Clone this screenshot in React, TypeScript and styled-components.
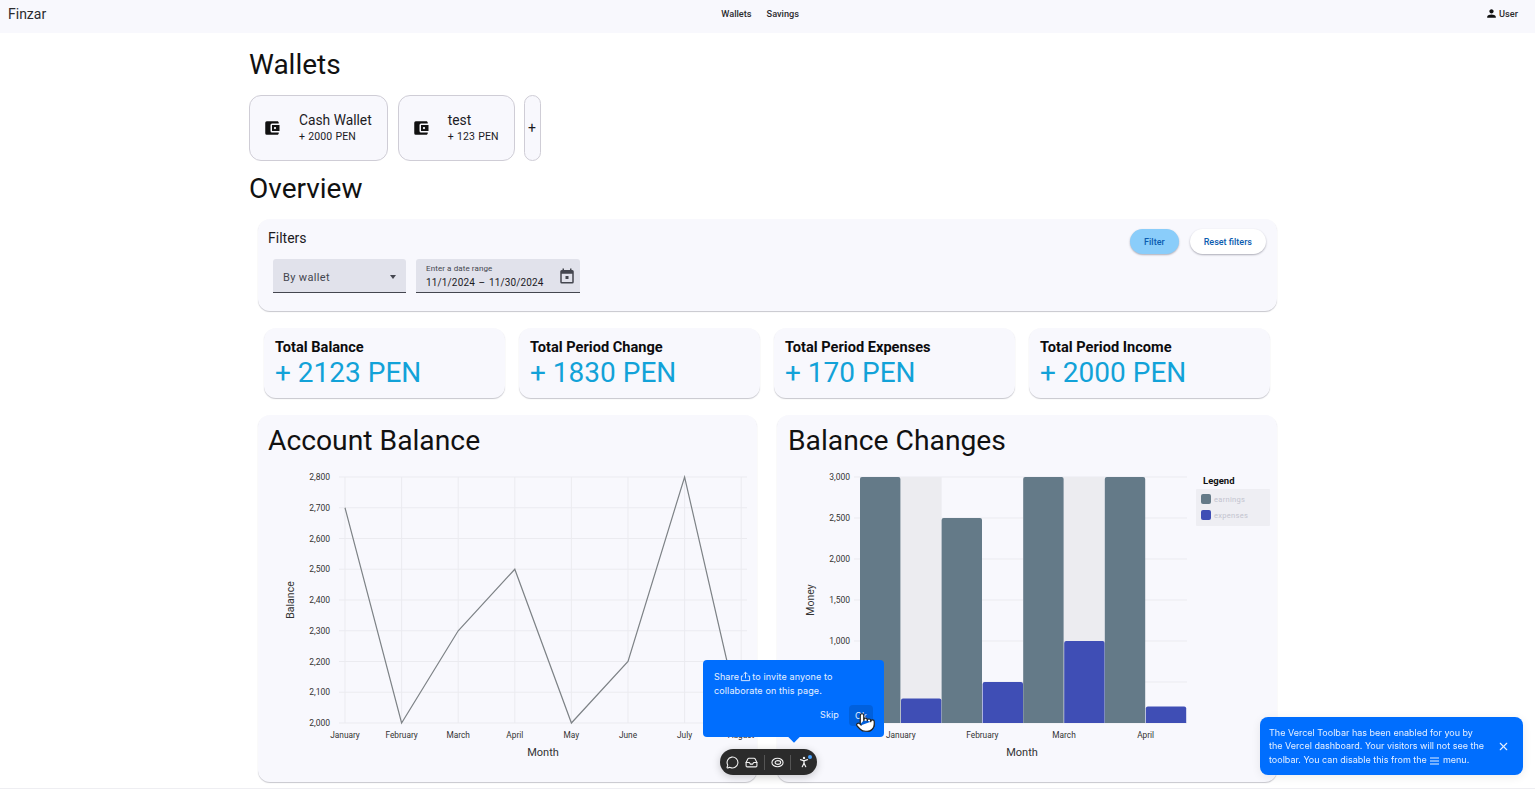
import React from "react";
import { Inbox, MessageCircle, PersonStanding, Pointer, X } from "lucide-react";
import { MdAccountBalanceWallet, MdPerson } from "react-icons/md";
import styled, { createGlobalStyle } from "styled-components";

const GlobalStyle = createGlobalStyle`
  html, body {
    margin: 0;
    height: 100%;
    overflow: hidden;
    background: #fff;
    font-family: Roboto, "Liberation Sans", sans-serif;
    color: #111;
  }
  * { box-sizing: border-box; }
`;

const surface = "#f8f8fd";

const Nav = styled.nav`
  height: 33px;
  padding: 0 17px 6px 8px;
  background: ${surface};
  display: flex;
  align-items: center;
  justify-content: space-between;
`;

const Brand = styled.span`
  font-size: 14px;
  color: #2b2b2e;
`;

const NavLinks = styled.div`
  display: flex;
  gap: 15px;
  padding-right: 11px;
`;

const NavLink = styled.a`
  font-size: 9.2px;
  font-weight: 500;
  color: #2b2b2e;
`;

const UserButton = styled.div`
  display: flex;
  align-items: center;
  gap: 1px;
  font-size: 9.2px;
  font-weight: 500;
  color: #2b2b2e;
`;

const Main = styled.main`
  width: 1037px;
  margin: 0 auto;
  padding: 14px 0 6px;
`;

const PageTitle = styled.h1<{ $top?: number }>`
  margin: ${({ $top }) => $top ?? 0}px 0 12px;
  font-size: 28px;
  line-height: 36px;
  font-weight: 400;
  color: #111;
`;

const WalletRow = styled.div`
  display: flex;
  gap: 10px;
`;

const WalletCard = styled.div`
  height: 66px;
  padding: 0 15px 0 13px;
  display: flex;
  align-items: center;
  gap: 18px;
  background: ${surface};
  border: 1px solid #cfcdd6;
  border-radius: 12px;
`;

const WalletText = styled.div`
  display: flex;
  flex-direction: column;
  gap: 1px;
  padding-bottom: 2px;
`;

const WalletName = styled.span`
  font-size: 13.8px;
  line-height: 18px;
  color: #1c1b1f;
`;

const WalletAmount = styled.span`
  font-size: 10.5px;
  line-height: 14px;
  letter-spacing: 0.1px;
  word-spacing: 0.5px;
  color: #1c1b1f;
`;

const AddWallet = styled.button`
  width: 17px;
  height: 66px;
  margin-left: -1px;
  padding: 0;
  font: 400 14px Roboto, sans-serif;
  color: #1c1b1f;
  background: ${surface};
  border: 1px solid #cfcdd6;
  border-radius: 9px;
`;

const Card = styled.section`
  background: ${surface};
  border-radius: 12px;
  box-shadow: 0 1px 1px rgba(70, 70, 90, 0.3);
`;

const FilterCard = styled(Card)`
  height: 92px;
  margin: 0 9px;
  padding: 10px 11px 18px 10px;
`;

const FilterHead = styled.div`
  display: flex;
  justify-content: space-between;
  align-items: center;
  height: 25px;
`;

const FilterTitle = styled.h2`
  margin: -8px 0 0;
  font-size: 14px;
  font-weight: 400;
  color: #1c1b1f;
`;

const FilterActions = styled.div`
  display: flex;
  gap: 11px;
`;

const ActionButton = styled.button<{ $primary?: boolean }>`
  height: 25px;
  padding: 0 14px;
  border: 0;
  border-radius: 13px;
  font: 500 9px Roboto, sans-serif;
  color: #0b5cb0;
  background: ${({ $primary }) => ($primary ? "#8acdfa" : "#fff")};
  box-shadow: 0 1px 2px rgba(60, 60, 80, 0.4);
`;

const FieldRow = styled.div`
  display: flex;
  gap: 10px;
  margin: 5px 0 0 5px;
`;

const Field = styled.div<{ $width: number }>`
  position: relative;
  width: ${({ $width }) => $width}px;
  height: 34px;
  padding: 2px 10px 0;
  display: flex;
  align-items: center;
  justify-content: space-between;
  background: #e1e2eb;
  border-bottom: 1px solid #44464f;
  border-radius: 3px 3px 0 0;
  color: #44464f;
`;

const SelectValue = styled.span`
  margin-top: 2px;
  font-size: 11px;
  letter-spacing: 0.35px;
`;

const SelectArrow = styled.span`
  width: 0;
  height: 0;
  border: 3.5px solid transparent;
  border-top: 4px solid #44464f;
  border-bottom: 0;
`;

const DateStack = styled.div`
  display: flex;
  flex-direction: column;
  gap: 2px;
`;

const DateLabel = styled.span`
  font-size: 8px;
  line-height: 10px;
  letter-spacing: 0.1px;
`;

const DateValue = styled.span`
  font-size: 10px;
  line-height: 14px;
  letter-spacing: 0.15px;
  color: #1c1b1f;
  word-spacing: 1px;
  white-space: nowrap;
`;

const CalendarSlot = styled.span`
  display: flex;
  margin: -2px -6px 0 0;
`;

const StatGrid = styled.div`
  display: grid;
  grid-template-columns: repeat(4, 241px);
  gap: 14px;
  margin: 17px 15px 0;
`;

const StatCard = styled(Card)`
  height: 70px;
  padding: 10px 11px;
`;

const StatTitle = styled.div`
  font-size: 14.6px;
  line-height: 18px;
  font-weight: 700;
  color: #0c0c0e;
`;

const StatValue = styled.div`
  margin-top: 1px;
  font-size: 28px;
  line-height: 32px;
  color: #12a2d8;
`;

const ChartGrid = styled.div`
  display: grid;
  grid-template-columns: 499px 500px;
  gap: 20px;
  margin: 17px 9px 0;
`;

const ChartCard = styled(Card)`
  height: 367px;
  padding: 8px 0 0;
`;

const ChartTitle = styled.h2<{ $inset: number }>`
  margin: 0 0 0 ${({ $inset }) => $inset}px;
  font-size: 28.25px;
  line-height: 36px;
  font-weight: 400;
  color: #111;
`;

const ChartSvg = styled.svg`
  display: block;
  font-family: Roboto, sans-serif;
`;

const Footer = styled.div`
  border-top: 1px solid #eeeef2;
  height: 10px;
`;

const Hint = styled.div`
  position: fixed;
  left: 703px;
  top: 660px;
  width: 181px;
  height: 77px;
  padding: 10px 11px;
  background: #006efe;
  border-radius: 4px;
  color: #e6f0ff;
  font: 400 9px/13.5px Inter, sans-serif;
  letter-spacing: 0.12px;

  &::after {
    content: "";
    position: absolute;
    left: 87px;
    bottom: -4px;
    width: 8px;
    height: 8px;
    background: #006efe;
    transform: rotate(45deg);
  }
`;

const HintActions = styled.div`
  display: flex;
  justify-content: flex-end;
  align-items: center;
  gap: 10px;
  margin-top: 8px;
`;

const SkipLabel = styled.span`
  margin-top: -2px;
`;

const OkButton = styled.span`
  width: 24px;
  height: 21px;
  padding-left: 6px;
  display: flex;
  align-items: center;
  border-radius: 4px;
  background: #0060dd;
`;

const Hand = styled.span`
  position: absolute;
  left: 152px;
  top: 52px;
  line-height: 0;
`;

const InlineIcon = styled.svg`
  vertical-align: -2px;
  margin: 0 1px;
`;

const Toolbar = styled.div`
  position: fixed;
  left: 720px;
  top: 749px;
  width: 97px;
  height: 26px;
  padding: 0 6px;
  display: flex;
  align-items: center;
  justify-content: space-between;
  background: #2b2b2b;
  border-radius: 13px;
  box-shadow: 0 2px 8px rgba(0, 0, 0, 0.2);
  color: #f2f2f2;
`;

const ToolDivider = styled.span`
  width: 1px;
  height: 15px;
  background: #555;
`;

const ToolDot = styled.span`
  position: relative;
  display: flex;

  &::after {
    content: "";
    position: absolute;
    right: -1px;
    top: 0;
    width: 4px;
    height: 4px;
    border-radius: 50%;
    background: #4aa3ff;
  }
`;

const Toast = styled.div`
  position: fixed;
  left: 1260px;
  top: 717px;
  width: 263px;
  height: 58px;
  padding: 0 13px 0 9px;
  display: flex;
  align-items: center;
  justify-content: space-between;
  background: #006efe;
  border-radius: 8px;
  box-shadow: 0 2px 10px rgba(0, 0, 0, 0.08);
  color: #e6f0ff;
  font: 400 9px/13.3px Inter, sans-serif;
`;

const ToastText = styled.p`
  margin: 0;
  white-space: nowrap;
`;

const WalletIcon = () => <MdAccountBalanceWallet size={18} color="#111" />;

const CalendarIcon = () => (
  <svg width="18" height="18" viewBox="0 0 24 24" fill="#44464f">
    <path d="M19 4h-1V2h-2v2H8V2H6v2H5a2 2 0 0 0-2 2v14a2 2 0 0 0 2 2h14a2 2 0 0 0 2-2V6a2 2 0 0 0-2-2zm0 16H5V9h14v11zM10 12h4v4h-4z" />
  </svg>
);

const ShareIcon = () => (
  <InlineIcon width="11" height="11" viewBox="0 0 12 12" fill="none" stroke="currentColor" strokeWidth="1">
    <path d="M6 8V1.5M3.8 3.5 6 1.3l2.2 2.2M3.5 5.5H1.5v5h9v-5h-2" />
  </InlineIcon>
);

const MenuLines = () => (
  <InlineIcon width="9" height="9" viewBox="0 0 9 9" stroke="currentColor" strokeWidth="1">
    <path d="M0 2h9M0 5h9M0 8h9" />
  </InlineIcon>
);

const EyeIcon = () => (
  <svg width="13" height="13" viewBox="0 0 14 14" fill="none" stroke="currentColor" strokeWidth="1.2">
    <ellipse cx="7" cy="7" rx="6" ry="4.6" />
    <ellipse cx="7.4" cy="7" rx="3" ry="2" />
  </svg>
);

const balanceTicks = ["2,800", "2,700", "2,600", "2,500", "2,400", "2,300", "2,200", "2,100", "2,000"];
const balanceMonths = ["January", "February", "March", "April", "May", "June", "July", "August"];
const balanceValues = [2700, 2000, 2300, 2500, 2000, 2200, 2800, 2000];

const balanceY = (v: number) => 723 - ((v - 2000) / 800) * 246;
const balanceX = (i: number) => 345 + i * 56.6;

const BalanceChart = () => (
  <ChartSvg width="499" height="323" viewBox="258 459 499 323">
    {balanceTicks.map((t, i) => {
      const y = 477 + i * 30.75;
      return (
        <g key={t}>
          <line x1="339" x2="747" y1={y} y2={y} stroke="#ebebf0" />
          <text x="330" y={y + 3} fontSize="8.5" textAnchor="end" fill="#333">
            {t}
          </text>
        </g>
      );
    })}
    {balanceMonths.map((m, i) => (
      <g key={m}>
        <line x1={balanceX(i)} x2={balanceX(i)} y1="477" y2="723" stroke="#ebebf0" />
        <text x={balanceX(i)} y="738" fontSize="8.3" textAnchor="middle" fill="#333">
          {m}
        </text>
      </g>
    ))}
    <polyline
      fill="none"
      stroke="#7d8286"
      strokeWidth="1.2"
      points={balanceValues.map((v, i) => `${balanceX(i)},${balanceY(v)}`).join(" ")}
    />
    <text x="543" y="756" fontSize="11" textAnchor="middle" fill="#333">
      Month
    </text>
    <text transform="translate(294 600) rotate(-90)" fontSize="10.5" textAnchor="middle" fill="#333">
      Balance
    </text>
  </ChartSvg>
);

const barPath = (x: number, w: number, top: number) =>
  `M${x} 723V${top + 2}q0-2 2-2H${x + w - 2}q2 0 2 2V723Z`;

const moneyTicks = ["3,000", "2,500", "2,000", "1,500", "1,000", "500", "0"];
const groups = [
  { label: "January", earn: 3000, spend: 300, band: true },
  { label: "February", earn: 2500, spend: 500, band: false },
  { label: "March", earn: 3000, spend: 1000, band: true },
  { label: "April", earn: 3000, spend: 200, band: false },
];

const moneyY = (v: number) => 723 - (v / 3000) * 246;

const ChangesChart = () => (
  <ChartSvg width="500" height="323" viewBox="777 459 500 323">
    {moneyTicks.map((t, i) => {
      const y = 477 + i * 41;
      return (
        <g key={t}>
          <line x1="854" x2="1187" y1={y} y2={y} stroke="#ebebf0" />
          <text x="850" y={y + 3} fontSize="8.5" textAnchor="end" fill="#333">
            {t}
          </text>
        </g>
      );
    })}
    {groups.map((g, i) => {
      const x = 860 + i * 81.6;
      return (
        <g key={g.label}>
          {g.band && <rect x={x} y="477" width="81.6" height="246" fill="#ececf0" />}
          <path d={barPath(x, 40.4, moneyY(g.earn))} fill="#647a88" />
          <path d={barPath(x + 41, 40.4, moneyY(g.spend))} fill="#3f4eb5" />
          <text x={x + 40.8} y="738" fontSize="8.3" textAnchor="middle" fill="#333">
            {g.label}
          </text>
        </g>
      );
    })}
    <text x="1022" y="756" fontSize="11" textAnchor="middle" fill="#333">
      Month
    </text>
    <text transform="translate(814 600) rotate(-90)" fontSize="10.5" textAnchor="middle" fill="#333">
      Money
    </text>
    <text x="1203" y="484" fontSize="9.5" fontWeight="700" fill="#111">
      Legend
    </text>
    <rect x="1196" y="489" width="74" height="37" rx="1" fill="#eeeef3" />
    <rect x="1201" y="494" width="10" height="10" rx="2" fill="#647a88" />
    <rect x="1201" y="510" width="10" height="10" rx="2" fill="#3f4eb5" />
    <text x="1214" y="502" fontSize="7.5" letterSpacing="0.3" fill="#c3c4cf">
      earnings
    </text>
    <text x="1214" y="518" fontSize="7.5" letterSpacing="0.3" fill="#c3c4cf">
      expenses
    </text>
  </ChartSvg>
);

const wallets = [
  { name: "Cash Wallet", amount: "+ 2000 PEN" },
  { name: "test", amount: "+ 123 PEN" },
];

const stats = [
  { title: "Total Balance", value: "+ 2123 PEN" },
  { title: "Total Period Change", value: "+ 1830 PEN" },
  { title: "Total Period Expenses", value: "+ 170 PEN" },
  { title: "Total Period Income", value: "+ 2000 PEN" },
];

export default function App() {
  return (
    <>
      <GlobalStyle />
      <Nav>
        <Brand>Finzar</Brand>
        <NavLinks>
          <NavLink>Wallets</NavLink>
          <NavLink>Savings</NavLink>
        </NavLinks>
        <UserButton>
          <MdPerson size={13} color="#111" />
          User
        </UserButton>
      </Nav>
      <Main>
        <PageTitle>Wallets</PageTitle>
        <WalletRow>
          {wallets.map((w) => (
            <WalletCard key={w.name}>
              <WalletIcon />
              <WalletText>
                <WalletName>{w.name}</WalletName>
                <WalletAmount>{w.amount}</WalletAmount>
              </WalletText>
            </WalletCard>
          ))}
          <AddWallet>+</AddWallet>
        </WalletRow>
        <PageTitle $top={10}>Overview</PageTitle>
        <FilterCard>
          <FilterHead>
            <FilterTitle>Filters</FilterTitle>
            <FilterActions>
              <ActionButton $primary>Filter</ActionButton>
              <ActionButton>Reset filters</ActionButton>
            </FilterActions>
          </FilterHead>
          <FieldRow>
            <Field $width={133}>
              <SelectValue>By wallet</SelectValue>
              <SelectArrow />
            </Field>
            <Field $width={164}>
              <DateStack>
                <DateLabel>Enter a date range</DateLabel>
                <DateValue>11/1/2024 – 11/30/2024</DateValue>
              </DateStack>
              <CalendarSlot>
                <CalendarIcon />
              </CalendarSlot>
            </Field>
          </FieldRow>
        </FilterCard>
        <StatGrid>
          {stats.map((s) => (
            <StatCard key={s.title}>
              <StatTitle>{s.title}</StatTitle>
              <StatValue>{s.value}</StatValue>
            </StatCard>
          ))}
        </StatGrid>
        <ChartGrid>
          <ChartCard>
            <ChartTitle $inset={10}>Account Balance</ChartTitle>
            <BalanceChart />
          </ChartCard>
          <ChartCard>
            <ChartTitle $inset={11}>Balance Changes</ChartTitle>
            <ChangesChart />
          </ChartCard>
        </ChartGrid>
      </Main>
      <Footer />
      <Hint>
        Share
        <ShareIcon />
        to invite anyone to
        <br />
        collaborate on this page.
        <HintActions>
          <SkipLabel>Skip</SkipLabel>
          <OkButton>Ok</OkButton>
        </HintActions>
        <Hand>
          <Pointer size={21} fill="#fff" stroke="#222" strokeWidth={1.4} />
        </Hand>
      </Hint>
      <Toolbar>
        <MessageCircle size={13} />
        <Inbox size={13} />
        <ToolDivider />
        <EyeIcon />
        <ToolDivider />
        <ToolDot>
          <PersonStanding size={14} />
        </ToolDot>
      </Toolbar>
      <Toast>
        <ToastText>
          The Vercel Toolbar has been enabled for you by
          <br />
          the Vercel dashboard. Your visitors will not see the
          <br />
          toolbar. You can disable this from the <MenuLines /> menu.
        </ToastText>
        <X size={13} />
      </Toast>
    </>
  );
}
